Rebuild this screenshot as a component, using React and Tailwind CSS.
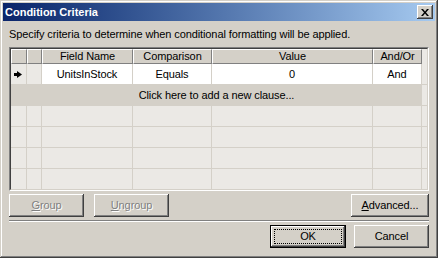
import React from "react";

const W = ["w-[16px]", "w-[15px]", "w-[91px]", "w-[79px]", "w-[161px]", "w-[49px]"];
const HEAD = ["", "", "Field Name", "Comparison", "Value", "And/Or"];

const raised =
  "shadow-[inset_-1px_-1px_#404040,inset_1px_1px_#ffffff,inset_-2px_-2px_#808080,inset_2px_2px_#d4d0c8]";

function Btn({ w, children, disabled }) {
  return (
    <div
      className={`${w} h-[23px] shrink-0 bg-[#d4d0c8] ${raised} flex items-center justify-center ${
        disabled ? "text-[#808080] [text-shadow:1px_1px_0_#ffffff]" : "text-black"
      }`}
    >
      {children}
    </div>
  );
}

function Arrow() {
  return (
    <svg width="9" height="7" viewBox="0 0 9 7">
      <rect x="0" y="2" width="3" height="3" fill="#000" />
      <polygon points="3,0 8,3.5 3,7" fill="#000" />
    </svg>
  );
}

function EmptyRow() {
  return (
    <div className="flex h-[21px] shrink-0">
      {W.map((w, i) => (
        <div key={i} className={`${w} shrink-0 border-r border-b border-[#d4d0c8] bg-[#ebe9e5]`} />
      ))}
      <div className="flex-1 border-b border-[#d4d0c8] bg-[#ebe9e5]" />
    </div>
  );
}

export default function App() {
  return (
    <div className="w-[438px] h-[258px] bg-[#d4d0c8] p-[3px] shadow-[inset_-1px_-1px_#404040,inset_1px_1px_#d4d0c8,inset_-2px_-2px_#808080,inset_2px_2px_#ffffff] font-['Liberation_Sans',Arial,sans-serif] text-[11px] tracking-[-0.1px] text-black flex flex-col overflow-hidden">
      {/* Title bar */}
      <div className="h-[18px] shrink-0 flex items-center justify-between pl-[2px] pr-[2px] bg-linear-to-r from-[#0a246a] to-[#a6caf0]">
        <span className="text-white font-bold text-[11px] leading-none tracking-normal">Condition Criteria</span>
        <div className={`w-[16px] h-[14px] bg-[#d4d0c8] ${raised} flex items-center justify-center`}>
          <svg width="8" height="7" viewBox="0 0 8 7">
            <path d="M0 0h2l2 2.5l2-2.5h2l-3 3.5l3 3.5h-2l-2-2.5l-2 2.5h-2l3-3.5z" fill="#000" />
          </svg>
        </div>
      </div>

      {/* Body */}
      <div className="flex flex-col px-[6px] pt-[7px]">
        <div className="h-[13px] leading-[13px] whitespace-nowrap">
          Specify criteria to determine when conditional formatting will be applied.
        </div>

        {/* Grid */}
        <div className="mt-[6px] h-[144px] w-[420px] border border-t-[#808080] border-l-[#808080] border-b-white border-r-white">
          <div className="h-full w-full border border-t-[#404040] border-l-[#404040] border-b-[#d4d0c8] border-r-[#d4d0c8] bg-[#ebe9e5] flex flex-col overflow-hidden">
            {/* header */}
            <div className="flex h-[15px] shrink-0">
              {HEAD.map((h, i) => (
                <div
                  key={i}
                  className={`${W[i]} shrink-0 bg-[#d4d0c8] border border-t-white border-l-white border-r-[#808080] border-b-[#808080] flex items-center justify-center leading-none`}
                >
                  {h}
                </div>
              ))}
              <div className="flex-1 bg-[#ebe9e5]" />
            </div>
            {/* row 1 */}
            <div className="flex h-[21px] shrink-0">
              <div className={`${W[0]} shrink-0 border-r border-b border-[#d4d0c8] bg-[#ebe9e5] flex items-center pl-[3px]`}>
                <Arrow />
              </div>
              <div className={`${W[1]} shrink-0 border-r border-b border-[#d4d0c8] bg-[#ebe9e5]`} />
              {["UnitsInStock", "Equals", "0", "And"].map((t, i) => (
                <div
                  key={i}
                  className={`${W[i + 2]} shrink-0 border-r border-b border-[#d4d0c8] bg-white flex items-center justify-center`}
                >
                  {t}
                </div>
              ))}
              <div className="flex-1 border-b border-[#d4d0c8] bg-[#ebe9e5]" />
            </div>
            {/* row 2 */}
            <div className="flex h-[21px] shrink-0">
              <div className="w-[411px] shrink-0 bg-[#d4d0c8] border-b border-[#d4d0c8] flex items-center justify-center">
                Click here to add a new clause...
              </div>
              <div className="flex-1 border-b border-[#d4d0c8] bg-[#ebe9e5]" />
            </div>
            <EmptyRow />
            <EmptyRow />
            <EmptyRow />
            <EmptyRow />
          </div>
        </div>

        {/* Buttons row */}
        <div className="mt-[3px] flex items-center">
          <Btn w="w-[75px]" disabled>
            <span className="underline underline-offset-1">G</span>roup
          </Btn>
          <div className="w-[10px]" />
          <Btn w="w-[75px]" disabled>
            <span className="underline underline-offset-1">U</span>ngroup
          </Btn>
          <div className="flex-1" />
          <Btn w="w-[78px]">
            <span className="underline underline-offset-1">A</span>dvanced...
          </Btn>
        </div>

        {/* separator */}
        <div className="mt-[3px] h-[2px] border-t border-t-[#808080] border-b border-b-white" />

        {/* OK / Cancel */}
        <div className="mt-[3px] flex justify-end gap-[8px]">
          <div className="w-[76px] h-[23px] bg-[#d4d0c8] shadow-[inset_0_0_0_1px_#000000,inset_-2px_-2px_#404040,inset_2px_2px_#ffffff,inset_-3px_-3px_#808080] p-[4px] flex">
            <div className="flex-1 border border-dotted border-black flex items-center justify-center">
              OK
            </div>
          </div>
          <Btn w="w-[75px]">Cancel</Btn>
        </div>
      </div>
    </div>
  );
}
